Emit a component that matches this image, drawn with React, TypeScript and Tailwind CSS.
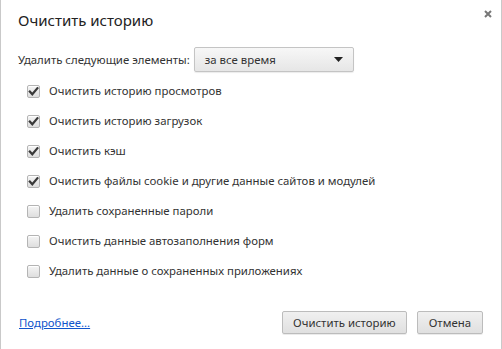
import { useState } from "react";

const items = [
    { label: "Очистить историю просмотров", checked: true },
    { label: "Очистить историю загрузок", checked: true },
    { label: "Очистить кэш", checked: true },
    { label: "Очистить файлы cookie и другие данные сайтов и модулей", checked: true },
    { label: "Удалить сохраненные пароли", checked: false },
    { label: "Очистить данные автозаполнения форм", checked: false },
    { label: "Удалить данные о сохраненных приложениях", checked: false },
];

function Checkbox({ checked, onClick }: { checked: boolean; onClick: () => void }) {
    return (
        <button
            onClick={onClick}
            className="w-[13px] h-[13px] rounded-[2px] border border-[#b4b4b4] bg-gradient-to-b from-[#f5f5f5] to-[#dedede] shadow-[inset_0_1px_0_#fff] flex items-center justify-center flex-shrink-0"
        >
            {checked && (
                <svg width="11" height="11" viewBox="0 0 11 11">
                    <path d="M1.8 5.6 L4.3 8.3 L9.4 2.2" fill="none" stroke="#3a3a3a" strokeWidth="2.2" strokeLinecap="square" />
                </svg>
            )}
        </button>
    );
}

export default function App() {
    const [checks, setChecks] = useState(items.map((i) => i.checked));

    return (
        <div className="w-[502px] h-[349px] bg-white border-l border-r border-[#c9c9c9] flex flex-col text-[#333] text-[11.4px] font-['Noto_Sans',sans-serif] relative">
            {/* Close */}
            <button className="absolute top-[9px] right-[9px] w-[9px] h-[9px] flex items-center justify-center">
                <svg width="8" height="8" viewBox="0 0 8 8">
                    <path d="M1 1 L7 7 M7 1 L1 7" stroke="#777" strokeWidth="2" />
                </svg>
            </button>

            {/* Title */}
            <div className="h-[40px] flex items-center pl-[17px] text-[15px] text-[#222]">Очистить историю</div>

            {/* Time range */}
            <div className="mt-[7px] h-[25px] flex items-center pl-[17px] gap-[4px]">
                <span>Удалить следующие элементы:</span>
                <div className="w-[160px] h-[25px] border border-[#c4c4c4] rounded-[2px] bg-gradient-to-b from-[#f7f7f7] to-[#e6e6e6] shadow-[0_1px_1px_rgba(0,0,0,0.08)] flex items-center justify-between pl-[10px] pr-[10px]">
                    <span>за все время</span>
                    <svg width="9" height="5" viewBox="0 0 9 5">
                        <path d="M0 0 L9 0 L4.5 5 Z" fill="#222" />
                    </svg>
                </div>
            </div>

            {/* Checkbox list */}
            <div className="mt-[4px] flex flex-col pl-[26px]">
                {items.map((item, i) => (
                    <div key={item.label} className="h-[30px] flex items-center gap-[9px]">
                        <Checkbox
                            checked={checks[i]}
                            onClick={() => setChecks(checks.map((c, j) => (j === i ? !c : c)))}
                        />
                        <span>{item.label}</span>
                    </div>
                ))}
            </div>

            {/* Footer */}
            <div className="mt-auto pb-[15px] pl-[18px] pr-[18px] flex items-center justify-between">
                <a href="#" className="text-[#1155cc] underline">Подробнее...</a>
                <div className="flex gap-[10px]">
                    <button className="h-[23px] px-[10px] border border-[#bcbcbc] rounded-[2px] bg-gradient-to-b from-[#f0f0f0] to-[#e0e0e0] shadow-[0_1px_0_rgba(0,0,0,0.08)] text-[#333]">
                        Очистить историю
                    </button>
                    <button className="h-[23px] px-[11px] border border-[#bcbcbc] rounded-[2px] bg-gradient-to-b from-[#f0f0f0] to-[#e0e0e0] shadow-[0_1px_0_rgba(0,0,0,0.08)] text-[#333]">
                        Отмена
                    </button>
                </div>
            </div>
        </div>
    );
}
